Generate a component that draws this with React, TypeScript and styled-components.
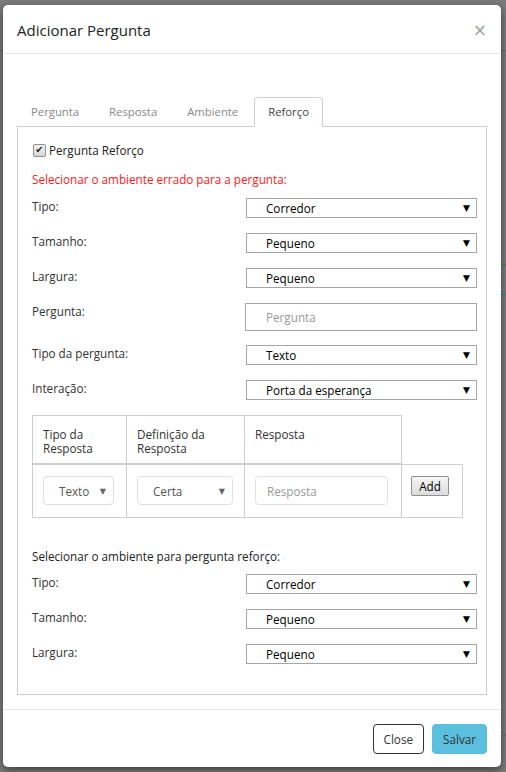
import React from 'react';
import styled, { createGlobalStyle } from 'styled-components';

const GlobalStyle = createGlobalStyle`
  html, body {
    margin: 0;
    padding: 0;
  }
  body {
    background: #7b7b7b;
    font-family: 'Open Sans', 'Noto Sans', sans-serif;
    font-size: 11.7px;
    color: #333;
  }
  * {
    box-sizing: border-box;
  }
`;

//style
const Backdrop = styled.div`
  height: 772px;
  padding: 5px 5px 0 3px;
  background:
    linear-gradient(#6a6a6a, #6a6a6a) 0 50px / 100% 1px no-repeat,
    linear-gradient(#6a6a6a, #6a6a6a) 0 735px / 100% 1px no-repeat,
    linear-gradient(#2d8a5c, #2d8a5c) 501px 264px / 5px 1px no-repeat,
    linear-gradient(#2d8a5c, #2d8a5c) 501px 294px / 5px 1px no-repeat,
    #7b7b7b;
`;

const Modal = styled.div`
  display: flex;
  flex-direction: column;
  width: 498px;
  height: 762px;
  background: white;
  border-radius: 5px;
  box-shadow: 0 3px 9px rgba(0, 0, 0, 0.5);
`;

const Header = styled.div`
  display: flex;
  justify-content: space-between;
  align-items: center;
  height: 51px;
  padding: 1px 10px 0 14px;
  border-bottom: 1px solid #e5e5e5;
`;

const Title = styled.h4`
  margin: 0;
  font-size: 15px;
  font-weight: normal;
  color: #222;
`;

const CloseX = styled.button`
  border: none;
  background: none;
  padding: 0 4px;
  font-family: 'DejaVu Sans', sans-serif;
  font-size: 17px;
  color: #a0a0a0;
  cursor: pointer;
`;

const Body = styled.div`
  flex: 1;
  padding: 43px 14px 14px;
`;

const TabList = styled.ul`
  display: flex;
  list-style: none;
  margin: 0 0 -1px;
  padding: 0;
`;

const Tab = styled.li<{ $active?: boolean }>`
  position: relative;
  z-index: 1;
  height: 30px;
  line-height: 28px;
  padding: 0 13px;
  margin-right: 2px;
  border: 1px solid ${(p) => (p.$active ? '#ccd0d4' : 'transparent')};
  border-bottom-color: ${(p) => (p.$active ? 'white' : 'transparent')};
  border-radius: 4px 4px 0 0;
  background: ${(p) => (p.$active ? 'white' : 'transparent')};
  font-size: 11.3px;
  color: ${(p) => (p.$active ? '#444' : '#888')};
`;

const Panel = styled.div`
  border: 1px solid #ccd0d4;
  padding: 14px 9px 15px 14px;
`;

const CheckRow = styled.label`
  display: flex;
  align-items: center;
  gap: 3px;
  height: 18px;
  margin-left: 1px;
  color: #222;
`;

const CheckBox = styled.span`
  display: inline-flex;
  align-items: center;
  justify-content: center;
  width: 13px;
  height: 13px;
  border: 1px solid #8f8f8f;
  border-radius: 2px;
  background: linear-gradient(#f4f4f4, #d6d6d6);
  font-family: 'DejaVu Sans', sans-serif;
  font-size: 10px;
  line-height: 1;
  color: #222;
`;

const Notice = styled.p<{ $warn?: boolean }>`
  margin: 11px 0 10px;
  line-height: 18px;
  color: ${(p) => (p.$warn ? '#ff1a1a' : '#222')};
`;

const SubTitle = styled(Notice)`
  margin: 29px 0 9px;
`;

const FormRow = styled.div<{ $gap?: number }>`
  display: grid;
  grid-template-columns: 214px 1fr;
  align-items: start;
  margin-bottom: ${(p) => p.$gap ?? 15}px;
`;

const Label = styled.span`
  line-height: 18px;
  margin-top: -1px;
  color: #333;
`;

const SelectWrap = styled.div<{ $soft?: boolean; $w?: number }>`
  position: relative;
  width: ${(p) => (p.$w ? `${p.$w}px` : 'auto')};
  &::after {
    content: '▼';
    position: absolute;
    right: ${(p) => (p.$soft ? '8px' : '7px')};
    top: 50%;
    transform: translateY(-50%);
    font-family: 'DejaVu Sans', sans-serif;
    font-size: ${(p) => (p.$soft ? '8px' : '9px')};
    color: ${(p) => (p.$soft ? '#666' : '#000')};
    pointer-events: none;
  }
`;

const Select = styled.select`
  appearance: none;
  display: block;
  width: 100%;
  height: 20px;
  padding: 0 0 0 19px;
  border: 1px solid #a6a6a6;
  border-radius: 0;
  background: white;
  font-family: inherit;
  font-size: 11.7px;
  color: #000;
`;

const TextInput = styled.input`
  display: block;
  width: 232px;
  height: 28px;
  margin-left: -1px;
  padding: 0 0 0 20px;
  border: 1px solid #a6a6a6;
  font-family: inherit;
  font-size: 11.7px;
  &::placeholder {
    color: #999;
  }
`;

const Table = styled.table`
  width: 430px;
  table-layout: fixed;
  border-collapse: collapse;

  th,
  td {
    border: 1px solid #ccd0d4;
    text-align: left;
    vertical-align: top;
  }
  th {
    font-weight: normal;
    line-height: 14px;
    padding: 11px 10px 8px;
    border-bottom: 2px solid #ccd0d4;
    color: #333;
  }
  td {
    padding: 11px 10px 12px;
  }
`;

const SoftSelect = styled.select`
  appearance: none;
  display: block;
  width: 100%;
  height: 29px;
  padding: 0 0 0 15px;
  border: 1px solid #e0e0e0;
  border-radius: 4px;
  background: white;
  font-family: inherit;
  font-size: 11.7px;
  color: #555;
`;

const SoftInput = styled.input`
  display: block;
  width: 133px;
  height: 29px;
  padding: 0 0 0 11px;
  border: 1px solid #e0e0e0;
  border-radius: 4px;
  font-family: inherit;
  font-size: 11.7px;
  &::placeholder {
    color: #999;
  }
`;

const AddButton = styled.button`
  width: 38px;
  height: 20px;
  margin-left: -1px;
  padding: 0;
  border: 1px solid #8f8f8f;
  border-radius: 2px;
  background: linear-gradient(#f6f6f6, #dcdcdc);
  font-family: inherit;
  font-size: 11.7px;
  color: #000;
`;

const Footer = styled.div`
  display: flex;
  justify-content: flex-end;
  gap: 8px;
  padding: 14px 14px 13px;
  border-top: 1px solid #e5e5e5;
`;

const Button = styled.button<{ $primary?: boolean }>`
  height: 30px;
  padding: 0 10px;
  border: 1px solid ${(p) => (p.$primary ? '#5bc0de' : '#333')};
  border-radius: 4px;
  background: ${(p) => (p.$primary ? '#5bc0de' : 'white')};
  font-family: inherit;
  font-size: 11.7px;
  color: #333;
`;

const tabs = ['Pergunta', 'Resposta', 'Ambiente', 'Reforço'];

function SelectRow({ label, value }: { label: string; value: string }) {
  return (
    <FormRow>
      <Label>{label}</Label>
      <SelectWrap>
        <Select defaultValue={value}>
          <option>{value}</option>
        </Select>
      </SelectWrap>
    </FormRow>
  );
}

export default function App() {
  return (
    <>
      <GlobalStyle />
      <Backdrop>
        <Modal>
          <Header>
            <Title>Adicionar Pergunta</Title>
            <CloseX>×</CloseX>
          </Header>
          <Body>
            <TabList>
              {tabs.map((t) => (
                <Tab key={t} $active={t === 'Reforço'}>
                  {t}
                </Tab>
              ))}
            </TabList>
            <Panel>
              <CheckRow>
                <CheckBox>✔</CheckBox>
                Pergunta Reforço
              </CheckRow>
              <Notice $warn>Selecionar o ambiente errado para a pergunta:</Notice>
              <SelectRow label="Tipo:" value="Corredor" />
              <SelectRow label="Tamanho:" value="Pequeno" />
              <SelectRow label="Largura:" value="Pequeno" />
              <FormRow $gap={14}>
                <Label>Pergunta:</Label>
                <TextInput placeholder="Pergunta" />
              </FormRow>
              <SelectRow label="Tipo da pergunta:" value="Texto" />
              <SelectRow label="Interação:" value="Porta da esperança" />

              <Table>
                <colgroup>
                  <col style={{ width: 94 }} />
                  <col style={{ width: 118 }} />
                  <col style={{ width: 157 }} />
                  <col style={{ width: 61 }} />
                </colgroup>
                <thead>
                  <tr>
                    <th>Tipo da Resposta</th>
                    <th>Definição da Resposta</th>
                    <th>Resposta</th>
                  </tr>
                </thead>
                <tbody>
                  <tr>
                    <td>
                      <SelectWrap $soft $w={71}>
                        <SoftSelect>
                          <option>Texto</option>
                        </SoftSelect>
                      </SelectWrap>
                    </td>
                    <td>
                      <SelectWrap $soft $w={96}>
                        <SoftSelect>
                          <option>Certa</option>
                        </SoftSelect>
                      </SelectWrap>
                    </td>
                    <td>
                      <SoftInput placeholder="Resposta" />
                    </td>
                    <td>
                      <AddButton>Add</AddButton>
                    </td>
                  </tr>
                </tbody>
              </Table>

              <SubTitle>Selecionar o ambiente para pergunta reforço:</SubTitle>
              <SelectRow label="Tipo:" value="Corredor" />
              <SelectRow label="Tamanho:" value="Pequeno" />
              <SelectRow label="Largura:" value="Pequeno" />
            </Panel>
          </Body>
          <Footer>
            <Button>Close</Button>
            <Button $primary>Salvar</Button>
          </Footer>
        </Modal>
      </Backdrop>
    </>
  );
}
